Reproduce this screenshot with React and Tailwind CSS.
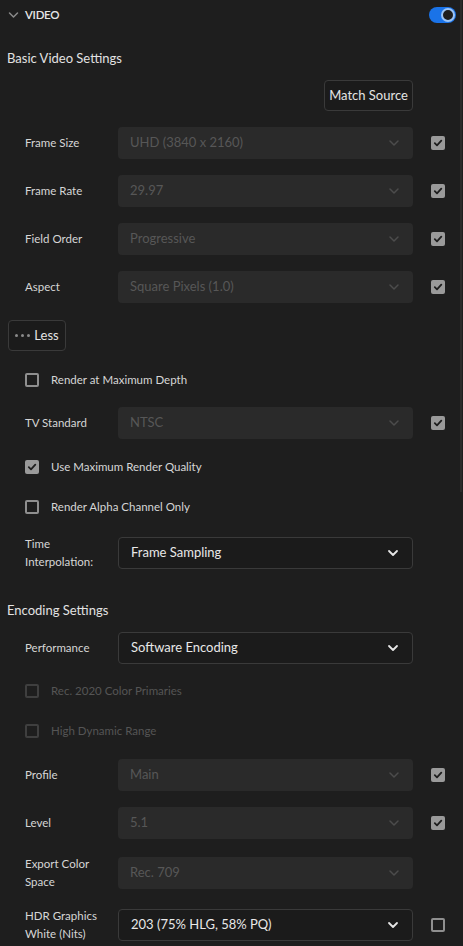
import React from "react";

const Chevron = ({ enabled }) => (
  <svg width="12" height="8" viewBox="0 0 12 8" fill="none">
    <path
      d="M2 2 L6 6 L10 2"
      stroke={enabled ? "#e6e6e6" : "#4c4c4c"}
      strokeWidth={enabled ? 1.8 : 1.5}
      strokeLinecap="round"
      strokeLinejoin="round"
    />
  </svg>
);

const CheckBox = ({ checked, disabled }) =>
  checked ? (
    <div className="w-[14px] h-[14px] rounded-[2px] bg-[#9a9a9a] flex items-center justify-center shrink-0">
      <svg width="10" height="10" viewBox="0 0 10 10" fill="none">
        <path d="M1.8 5.2 L4 7.3 L8.3 2.6" stroke="#1e1e1e" strokeWidth="1.8" strokeLinecap="round" strokeLinejoin="round" />
      </svg>
    </div>
  ) : (
    <div
      className={
        "w-[14px] h-[14px] rounded-[2px] border-2 shrink-0 " +
        (disabled ? "border-[#3f3f3f]" : "border-[#8f8f8f]")
      }
    />
  );

const Select = ({ value, enabled }) => (
  <div
    className={
      "w-[295px] h-[32px] rounded-[4px] flex items-center justify-between pl-[12px] pr-[13px] shrink-0 " +
      (enabled
        ? "bg-[#1b1b1b] border border-[#3a3a3a] text-[#e8e8e8]"
        : "bg-[#2a2a2a] text-[#575757]")
    }
  >
    <span className="text-[13px] whitespace-nowrap">{value}</span>
    <Chevron enabled={enabled} />
  </div>
);

const Row = ({ label, value, enabled, check, mt }) => (
  <div className={"flex items-center h-[32px] pl-[25px] " + mt}>
    <div className="w-[93px] text-[11.5px] leading-[18px] text-[#d6d6d6] shrink-0">{label}</div>
    <Select value={value} enabled={enabled} />
    {check !== undefined && (
      <div className="ml-[18px]">
        <CheckBox checked={check} />
      </div>
    )}
  </div>
);

const CheckRow = ({ label, checked, disabled, mt }) => (
  <div className={"flex items-center h-[20px] pl-[25px] " + mt}>
    <CheckBox checked={checked} disabled={disabled} />
    <span className={"ml-[12px] text-[11.5px] " + (disabled ? "text-[#555555]" : "text-[#d6d6d6]")}>{label}</span>
  </div>
);

export default function App() {
  return (
    <div
      className="relative w-[463px] h-[946px] bg-[#1e1e1e] overflow-hidden"
      style={{ fontFamily: "Lato, 'Open Sans', sans-serif" }}
    >
      <div className="absolute right-[1px] top-0 w-[2px] h-[492px] bg-[#2b2b2b]" />
      {/* header */}
      <div className="h-[30px] flex items-center pl-[8px] pr-[7px]">
        <svg width="11" height="8" viewBox="0 0 11 8" fill="none">
          <path d="M1.5 2 L5.5 6 L9.5 2" stroke="#8a8a8a" strokeWidth="1.5" strokeLinecap="round" strokeLinejoin="round" />
        </svg>
        <span className="ml-[6px] text-[11.5px] font-semibold text-[#e6e6e6] tracking-tight">VIDEO</span>
        <div className="ml-auto w-[27px] h-[16px] rounded-full bg-[#1a73e8] flex items-center justify-end pr-[1px]">
          <div className="w-[14px] h-[14px] rounded-full bg-[#1e1e1e] border-2 border-[#9cc4f5]" />
        </div>
      </div>

      <div className="mt-[19px] h-[20px] flex items-center pl-[7px] text-[13px] text-[#e2e2e2]">Basic Video Settings</div>

      <div className="mt-[11px] flex justify-end pr-[50px]">
        <div className="h-[31px] w-[89px] flex items-center justify-center rounded-[4px] bg-[#1b1b1b] border border-[#3a3a3a] text-[13px] text-[#e4e4e4]">
          Match Source
        </div>
      </div>

      <Row mt="mt-[16px]" label="Frame Size" value="UHD (3840 x 2160)" check={true} />
      <Row mt="mt-[16px]" label="Frame Rate" value="29.97" check={true} />
      <Row mt="mt-[16px]" label="Field Order" value="Progressive" check={true} />
      <Row mt="mt-[16px]" label="Aspect" value="Square Pixels (1.0)" check={true} />

      <div className="mt-[17px] pl-[8px] flex">
        <div className="h-[31px] w-[58px] flex items-center justify-center gap-[4px] rounded-[4px] bg-[#1b1b1b] border border-[#3a3a3a]">
          <span className="flex gap-[3px]">
            <span className="w-[3px] h-[3px] rounded-full bg-[#8a8a8a]" />
            <span className="w-[3px] h-[3px] rounded-full bg-[#8a8a8a]" />
            <span className="w-[3px] h-[3px] rounded-full bg-[#8a8a8a]" />
          </span>
          <span className="text-[13px] text-[#e4e4e4]">Less</span>
        </div>
      </div>

      <CheckRow mt="mt-[19px]" label="Render at Maximum Depth" checked={false} />
      <Row mt="mt-[17px]" label="TV Standard" value="NTSC" check={true} />
      <CheckRow mt="mt-[18px]" label="Use Maximum Render Quality" checked={true} />
      <CheckRow mt="mt-[20px]" label="Render Alpha Channel Only" checked={false} />
      <Row mt="mt-[20px]" label={<>Time<br />Interpolation:</>} value="Frame Sampling" enabled />

      <div className="mt-[32px] h-[20px] flex items-center pl-[7px] text-[13px] text-[#e2e2e2]">Encoding Settings</div>
      <Row mt="mt-[11px]" label="Performance" value="Software Encoding" enabled />
      <CheckRow mt="mt-[17px]" label="Rec. 2020 Color Primaries" checked={false} disabled />
      <CheckRow mt="mt-[20px]" label="High Dynamic Range" checked={false} disabled />
      <Row mt="mt-[18px]" label="Profile" value="Main" check={true} />
      <Row mt="mt-[16px]" label="Level" value="5.1" check={true} />
      <Row mt="mt-[18px]" label={<>Export Color<br />Space</>} value="Rec. 709" />
      <Row mt="mt-[20px]" label={<>HDR Graphics<br />White (Nits)</>} value="203 (75% HLG, 58% PQ)" enabled check={false} />
    </div>
  );
}
